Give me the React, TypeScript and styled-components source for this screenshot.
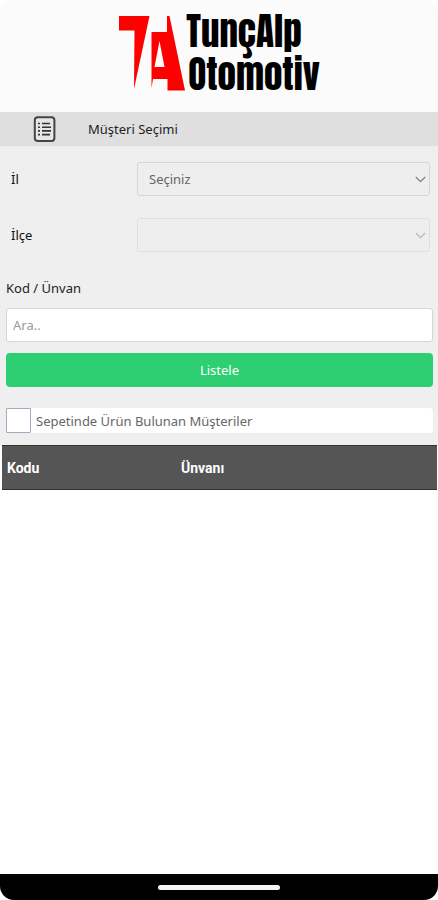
import React from "react";
import styled, { createGlobalStyle } from "styled-components";

const GlobalStyle = createGlobalStyle`
  * { box-sizing: border-box; }
  body {
    margin: 0;
    background: #fff;
    color: #222;
    font-family: "Noto Sans", "Open Sans", sans-serif;
    font-size: 13px;
    line-height: 20px;
  }
  input, select, button { font: inherit; margin: 0; }
`;

const Page = styled.div`
  display: flex;
  flex-direction: column;
  min-height: 100vh;
`;

const Header = styled.header`
  display: flex;
  justify-content: center;
  padding: 10px 0 16px;
  background: #fbfbfb;
  border-radius: 12px 12px 0 0;
`;

const Brand = styled.div`
  display: flex;
  align-items: flex-end;
`;

const BrandMark = styled.svg`
  display: block;
  width: 68px;
  height: 82px;
`;

const BrandName = styled.h1`
  display: flex;
  flex-direction: column;
  margin: 0;
  color: #000;
  font-family: Anton, Roboto, sans-serif;
  font-size: 37px;
  font-weight: 400;
  line-height: 43px;
`;

const BrandLine = styled.span<{ $indent?: boolean }>`
  padding-left: ${(p) => (p.$indent ? "2px" : "0")};
`;

const TitleBar = styled.div`
  display: flex;
  align-items: center;
  gap: 32px;
  height: 34px;
  padding: 0 33px;
  background: #dfdfdf;
`;

const Title = styled.h2`
  margin: 0;
  font-size: 13px;
  font-weight: 400;
`;

const Form = styled.form`
  display: flex;
  flex-direction: column;
  padding: 16px 5px 12px 6px;
  background: #efefef;
`;

const SelectRow = styled.div`
  display: grid;
  grid-template-columns: 126px 1fr;
  align-items: center;
  margin-bottom: 22px;
  padding: 0 3px 0 5px;
`;

const Label = styled.label`
  color: #111;
`;

const SelectBox = styled.div`
  position: relative;
`;

const Select = styled.select`
  display: block;
  width: 100%;
  height: 34px;
  padding: 0 24px 0 11px;
  appearance: none;
  border: 1px solid #d6d6d6;
  border-radius: 3px;
  background: #eee;
  color: #666;
  opacity: 1;
  &:disabled { border-color: #dfdfdf; }
`;

const Chevron = styled.svg<{ $muted?: boolean }>`
  position: absolute;
  top: 14px;
  right: 4px;
  width: 11px;
  height: 7px;
  fill: none;
  stroke: ${(p) => (p.$muted ? "#bdbdbd" : "#858585")};
  stroke-width: 1.3;
  pointer-events: none;
`;

const SearchLabel = styled(Label)`
  margin: 4px 0 10px;
  color: #222;
`;

const SearchInput = styled.input`
  width: 100%;
  height: 34px;
  padding: 0 6px;
  border: 1px solid #d6d6d6;
  border-radius: 3px;
  background: #fff;
  color: #444;
  &::placeholder { color: #999; opacity: 1; }
`;

const ListButton = styled.button`
  height: 34px;
  margin: 11px 0 21px;
  border: 0;
  border-radius: 4px;
  background: #2ecf72;
  color: #fff;
`;

const CheckRow = styled.label`
  display: flex;
  align-items: center;
  gap: 5px;
  height: 25px;
  border-radius: 4px;
  background: #fff;
  color: #666;
`;

const Checkbox = styled.input`
  width: 25px;
  height: 25px;
  appearance: none;
  border: 1px solid #a7a8bd;
  border-radius: 1px;
  background: #fff;
  &:checked { background: #2ecf72; }
`;

const TableArea = styled.main`
  flex: 1;
  padding: 0 1px 0 2px;
`;

const Table = styled.table`
  width: 100%;
  border-collapse: collapse;
  table-layout: fixed;
  background: #555;
`;

const HeadCell = styled.th<{ $width?: string }>`
  width: ${(p) => p.$width ?? "auto"};
  height: 44px;
  padding: 0 5px;
  border-top: 1px solid #333;
  border-bottom: 1px solid #333;
  color: #fff;
  font-family: Roboto, sans-serif;
  font-size: 14px;
  font-weight: 700;
  text-align: left;
`;

const SystemBar = styled.footer`
  display: flex;
  justify-content: center;
  align-items: center;
  height: 26px;
  border-radius: 0 0 14px 14px;
  background: #000;
`;

const HomeIndicator = styled.div`
  width: 28%;
  height: 5px;
  border-radius: 3px;
  background: #f4f4f4;
`;

function DropDown({ id, options, disabled }: { id: string; options: string[]; disabled?: boolean }) {
  return (
    <SelectBox>
      <Select id={id} disabled={disabled}>
        {options.map((option) => (
          <option key={option}>{option}</option>
        ))}
      </Select>
      <Chevron viewBox="0 0 11 7" $muted={disabled} aria-hidden="true">
        <path d="M0.8 1 L5.5 5.5 L10.2 1" />
      </Chevron>
    </SelectBox>
  );
}

function ListIcon() {
  return (
    <svg width="23" height="27" viewBox="0 0 23 27" fill="none" aria-hidden="true">
      <rect x="1.8" y="1.3" width="19.6" height="23.6" rx="3" fill="#e6e6e6" stroke="#444" strokeWidth="2" />
      <g stroke="#333" strokeWidth="1.6">
        <path d="M5 7.5h2M5 11.2h2M5 14.9h2M5 18.6h2" />
        <path d="M9 7.5h8M9 11.2h9M9 14.9h9M9 18.6h8" />
      </g>
    </svg>
  );
}

export default function App() {
  return (
    <>
      <GlobalStyle />
      <Page>
        <Header>
          <Brand>
            <BrandMark viewBox="0 0 68 82" aria-hidden="true">
              <path
                fill="#fe0000"
                d="M1 2H31.5L16 75L16.5 16.5H1ZM49 2H51.5L67 76.5H49.5V65H35L33.5 74V18H49ZM41.5 27L36.5 53H46.5Z"
                fillRule="evenodd"
              />
            </BrandMark>
            <BrandName>
              <BrandLine>TunçAlp</BrandLine>
              <BrandLine $indent>Otomotiv</BrandLine>
            </BrandName>
          </Brand>
        </Header>
        <TitleBar>
          <ListIcon />
          <Title>Müşteri Seçimi</Title>
        </TitleBar>
        <Form onSubmit={(event) => event.preventDefault()}>
          <SelectRow>
            <Label htmlFor="il">İl</Label>
            <DropDown id="il" options={["Seçiniz"]} />
          </SelectRow>
          <SelectRow>
            <Label htmlFor="ilce">İlçe</Label>
            <DropDown id="ilce" options={[]} disabled />
          </SelectRow>
          <SearchLabel htmlFor="ara">Kod / Ünvan</SearchLabel>
          <SearchInput id="ara" type="text" placeholder="Ara.." />
          <ListButton type="submit">Listele</ListButton>
          <CheckRow>
            <Checkbox type="checkbox" />
            Sepetinde Ürün Bulunan Müşteriler
          </CheckRow>
        </Form>
        <TableArea>
          <Table>
            <thead>
              <tr>
                <HeadCell scope="col" $width="40%">Kodu</HeadCell>
                <HeadCell scope="col">Ünvanı</HeadCell>
              </tr>
            </thead>
          </Table>
        </TableArea>
        <SystemBar>
          <HomeIndicator />
        </SystemBar>
      </Page>
    </>
  );
}
